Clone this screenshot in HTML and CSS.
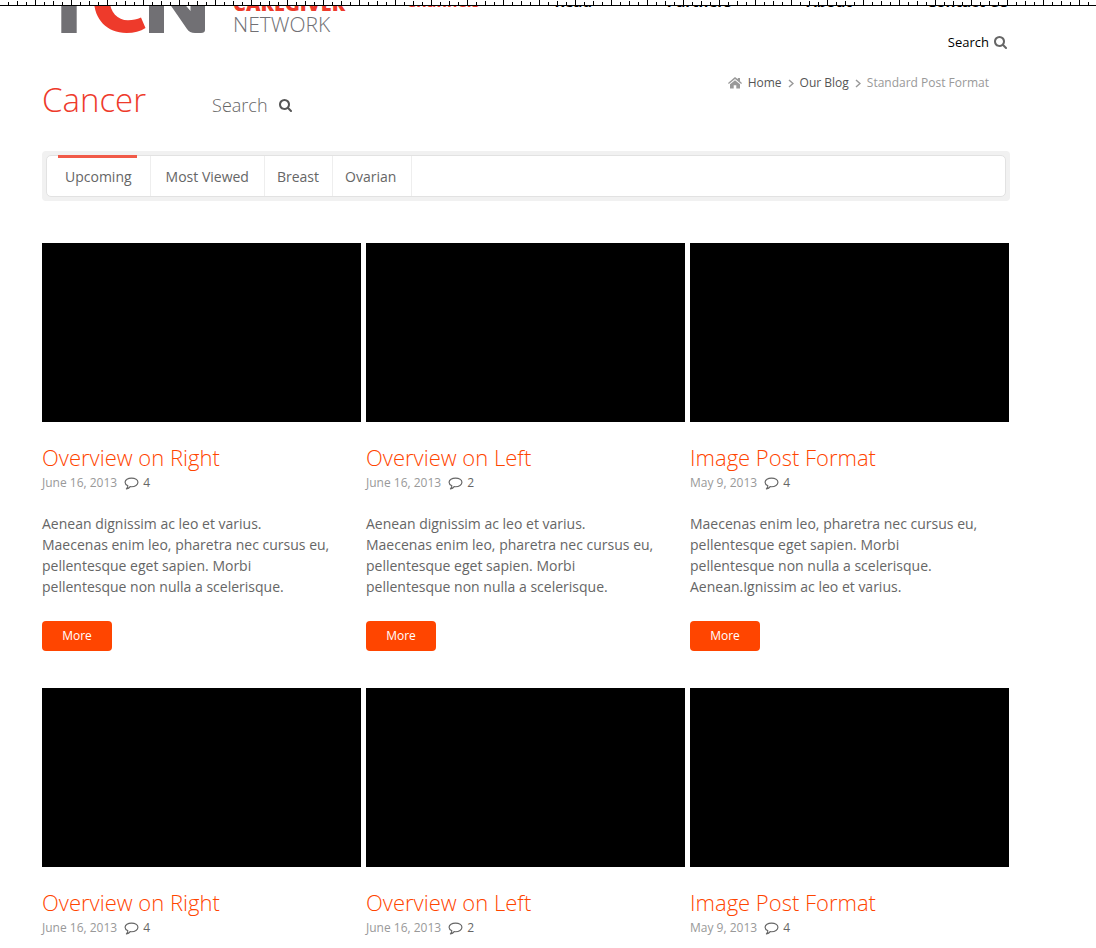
FILE: index.html
```html
<!DOCTYPE html>
<html lang="en">
<head>
<meta charset="utf-8">
<title>Cancer - Caregiver Network</title>
<link rel="stylesheet" href="styles.css">
</head>
<body>
<svg class="sprite" aria-hidden="true">
  <symbol id="search" viewBox="0 0 1664 1664"><path d="M1152 704q0-185-131.500-316.500T704 256 387.500 387.500 256 704t131.500 316.500T704 1152t316.500-131.500T1152 704zm512 832q0 52-38 90t-90 38q-54 0-90-38l-343-342q-179 124-399 124-143 0-273.500-55.500t-225-150-150-225T0 704t55.500-273.500 150-225 225-150T704 0t273.500 55.500 225 150 150 225T1408 704q0 220-124 399l343 343q37 37 37 90z"/></symbol>
  <symbol id="comment" viewBox="0 0 28 24"><path d="M14 2C7.400 2 2 5.400 2 9.800c0 2.600 1.900 5 5.200 6.500C7 18.500 6 20.500 4.500 22c3-.5 5.500-2 7-4.200.8.100 1.600.2 2.500.2 6.600 0 12-3.600 12-8.200S20.600 2 14 2z" fill="none" stroke="currentColor" stroke-width="2.200" stroke-linejoin="round"/></symbol>
</svg>
<div class="ruler"></div>
<div class="page">
  <header class="header">
    <a class="logo" href="#" aria-label="TCN Caregiver Network">
      <svg class="logo-mark" viewBox="0 0 146 34" aria-hidden="true">
        <path d="M1.300 0h15.400v33H1.300z" fill="#717074"/>
        <path d="M34 0C34 19 47 33 66.500 33c7.500 0 14-1.800 19-5L81 17.500c-4 1.800-8 2.800-13 2.800C57.500 20.300 50 12 49.500 0z" fill="#ee3a2b"/>
        <path d="M89 0h15v33H89zM107 0h14l9.500 11V0H145v30q0 3-4 3h-6q-5.500 0-8-4z" fill="#717074"/>
      </svg>
      <span class="logo-text"><strong>CAREGIVER</strong><span>NETWORK</span></span>
    </a>
    <nav class="nav">
      <a class="current" href="#">Channels</a><a href="#">Read</a><a href="#">Partners</a><a href="#">About</a><a href="#">Contact Us</a>
    </nav>
  </header>
  <div class="top-search"><button type="button">Search <svg class="icon-lg"><use href="#search"/></svg></button></div>
  <div class="title-row">
    <h1>Cancer</h1>
    <button class="title-search" type="button">Search <svg class="icon"><use href="#search"/></svg></button>
    <nav class="crumbs" aria-label="Breadcrumb">
      <svg class="home" viewBox="0 0 14 12"><path d="M7 3.200l5 4.100v4.200H8.300V8.200H5.700v3.300H2V7.300z"/><path d="M7 0l2.800 2.300V1H12v3.200L14 6l-.8.900L7 1.900.8 6.900 0 6z"/></svg>
      <a href="#">Home</a>
      <svg class="chevron" viewBox="0 0 6 9"><path d="M1 1l4 3.500-4 3.500"/></svg>
      <a href="#">Our Blog</a>
      <svg class="chevron" viewBox="0 0 6 9"><path d="M1 1l4 3.500-4 3.500"/></svg>
      <span>Standard Post Format</span>
    </nav>
  </div>
  <nav class="tabs" aria-label="Posts">
    <div class="tabs-inner">
      <a class="active" href="#">Upcoming</a><a class="wide" href="#">Most Viewed</a><a href="#">Breast</a><a class="last" href="#">Ovarian</a>
    </div>
  </nav>
  <main class="posts">
    <article><div class="thumb"></div><h2>Overview on Right</h2><div class="meta">June 16, 2013 <a href="#"><svg><use href="#comment"/></svg>4</a></div>
      <p>Aenean dignissim ac leo et varius.<br>Maecenas enim leo, pharetra nec cursus eu, pellentesque eget sapien. Morbi<br>pellentesque non nulla a scelerisque.</p><button class="more" type="button">More</button></article>
    <article><div class="thumb"></div><h2>Overview on Left</h2><div class="meta">June 16, 2013 <a href="#"><svg><use href="#comment"/></svg>2</a></div>
      <p>Aenean dignissim ac leo et varius.<br>Maecenas enim leo, pharetra nec cursus eu, pellentesque eget sapien. Morbi<br>pellentesque non nulla a scelerisque.</p><button class="more" type="button">More</button></article>
    <article><div class="thumb"></div><h2>Image Post Format</h2><div class="meta">May 9, 2013 <a href="#"><svg><use href="#comment"/></svg>4</a></div>
      <p>Maecenas enim leo, pharetra nec cursus eu, pellentesque eget sapien. Morbi<br>pellentesque non nulla a scelerisque. Aenean.Ignissim ac leo et varius.</p><button class="more" type="button">More</button></article>
    <article><div class="thumb"></div><h2>Overview on Right</h2><div class="meta">June 16, 2013 <a href="#"><svg><use href="#comment"/></svg>4</a></div></article>
    <article><div class="thumb"></div><h2>Overview on Left</h2><div class="meta">June 16, 2013 <a href="#"><svg><use href="#comment"/></svg>2</a></div></article>
    <article><div class="thumb"></div><h2>Image Post Format</h2><div class="meta">May 9, 2013 <a href="#"><svg><use href="#comment"/></svg>4</a></div></article>
  </main>
</div>
</body>
</html>
```

FILE: styles.css
```css
* { box-sizing: border-box; }
body { margin: 0; background: #fff; color: #666; font: 14px/21px "Open Sans", sans-serif; }
a { color: inherit; text-decoration: none; }
button { border: 0; padding: 0; background: none; font: inherit; color: inherit; cursor: pointer; }
h1, h2, p { margin: 0; }
.sprite { display: none; }
.ruler {
  position: absolute; top: 0; left: 0; right: 0; z-index: 2; height: 6px;
  border-bottom: 1px solid #000;
  background:
    repeating-linear-gradient(90deg, transparent 0 35px, #000 35px 36px) 0 0 / 100% 5px no-repeat,
    repeating-linear-gradient(90deg, transparent 0 17px, #000 17px 18px) 0 1px / 100% 4px no-repeat,
    repeating-linear-gradient(90deg, transparent 0 8px, #000 8px 9px) 0 2px / 100% 3px no-repeat,
    #fff;
}
.page { padding: 0 87px 0 42px; overflow: hidden; }
.header { display: flex; align-items: flex-start; height: 34px; }
.logo { display: flex; gap: 27px; margin-left: 18px; }
.logo-mark { width: 146px; height: 34px; }
.logo-text { display: flex; flex-direction: column; margin-top: -6px; width: 112px; font-size: 20px; line-height: 20px; color: #717074; }
.logo-text strong { font-weight: 800; color: #ee3a2b; }
.logo-text span { font-size: 21px; font-weight: 300; }
.nav { display: flex; flex: 1; justify-content: space-between; margin: -9px 1px 0 61px; font-size: 15px; line-height: 20px; font-weight: 700; color: #000; }
.nav .current { font-size: 16px; color: #ee3a2b; }
.top-search { display: flex; justify-content: flex-end; font-size: 13px; line-height: 16px; color: #000; padding-right: 2px; }
.top-search button { display: flex; align-items: center; gap: 5px; }
.icon-lg { width: 13px; height: 13px; fill: #666; }
.icon { width: 13px; height: 13px; fill: #555; }
.title-row { display: flex; height: 101px; align-items: flex-start; padding-top: 20px; }
h1 { font-size: 33px; line-height: 60px; font-weight: 300; color: #ee3a2b; }
.title-search { display: flex; align-items: center; gap: 11px; margin: 23px 0 0 66px; font-size: 18px; line-height: 24px; font-weight: 300; }
.crumbs { display: flex; align-items: center; margin: 4px 20px 0 auto; font-size: 12px; line-height: 18px; color: #999; }
.crumbs a { color: #555; }
.home { width: 14px; height: 12px; margin-right: 6px; fill: #999; }
.chevron { width: 6px; height: 9px; margin: 0 6px; fill: none; stroke: #999; stroke-width: 1.500; }
.tabs { padding: 4px; border-radius: 4px; background: #f1f1f1; margin-right: -1px; }
.tabs-inner { display: flex; height: 42px; border: 1px solid #e2e2e2; border-radius: 5px; background: #fff; }
.tabs a { position: relative; padding: 0 13px 0 12px; border-right: 1px solid #eee; line-height: 42px; }
.tabs .active { padding: 0 18px; }
.tabs .active::before { content: ""; position: absolute; top: -1px; left: 11px; right: 13px; height: 3px; background: #f15a48; }
.tabs .wide { padding: 0 15px; }
.tabs .last { padding-right: 15px; }
.posts { display: grid; grid-template-columns: repeat(3, 1fr); gap: 37px 5px; padding-top: 42px; }
.thumb { aspect-ratio: 319 / 179; background: #000; }
h2 { margin-top: 20px; font-size: 22px; line-height: 30px; font-weight: 300; color: #ff4500; }
.meta { display: flex; align-items: center; gap: 7px; font-size: 12px; line-height: 22px; color: #999; }
.meta a { display: flex; align-items: center; gap: 4px; color: #666; }
.meta svg { width: 15px; height: 13px; }
article p { margin: 19px 24px 24px 0; }
.more { width: 70px; height: 30px; border-radius: 4px; background: #ff4500; color: #fff; font-size: 12px; line-height: 30px; }
```
